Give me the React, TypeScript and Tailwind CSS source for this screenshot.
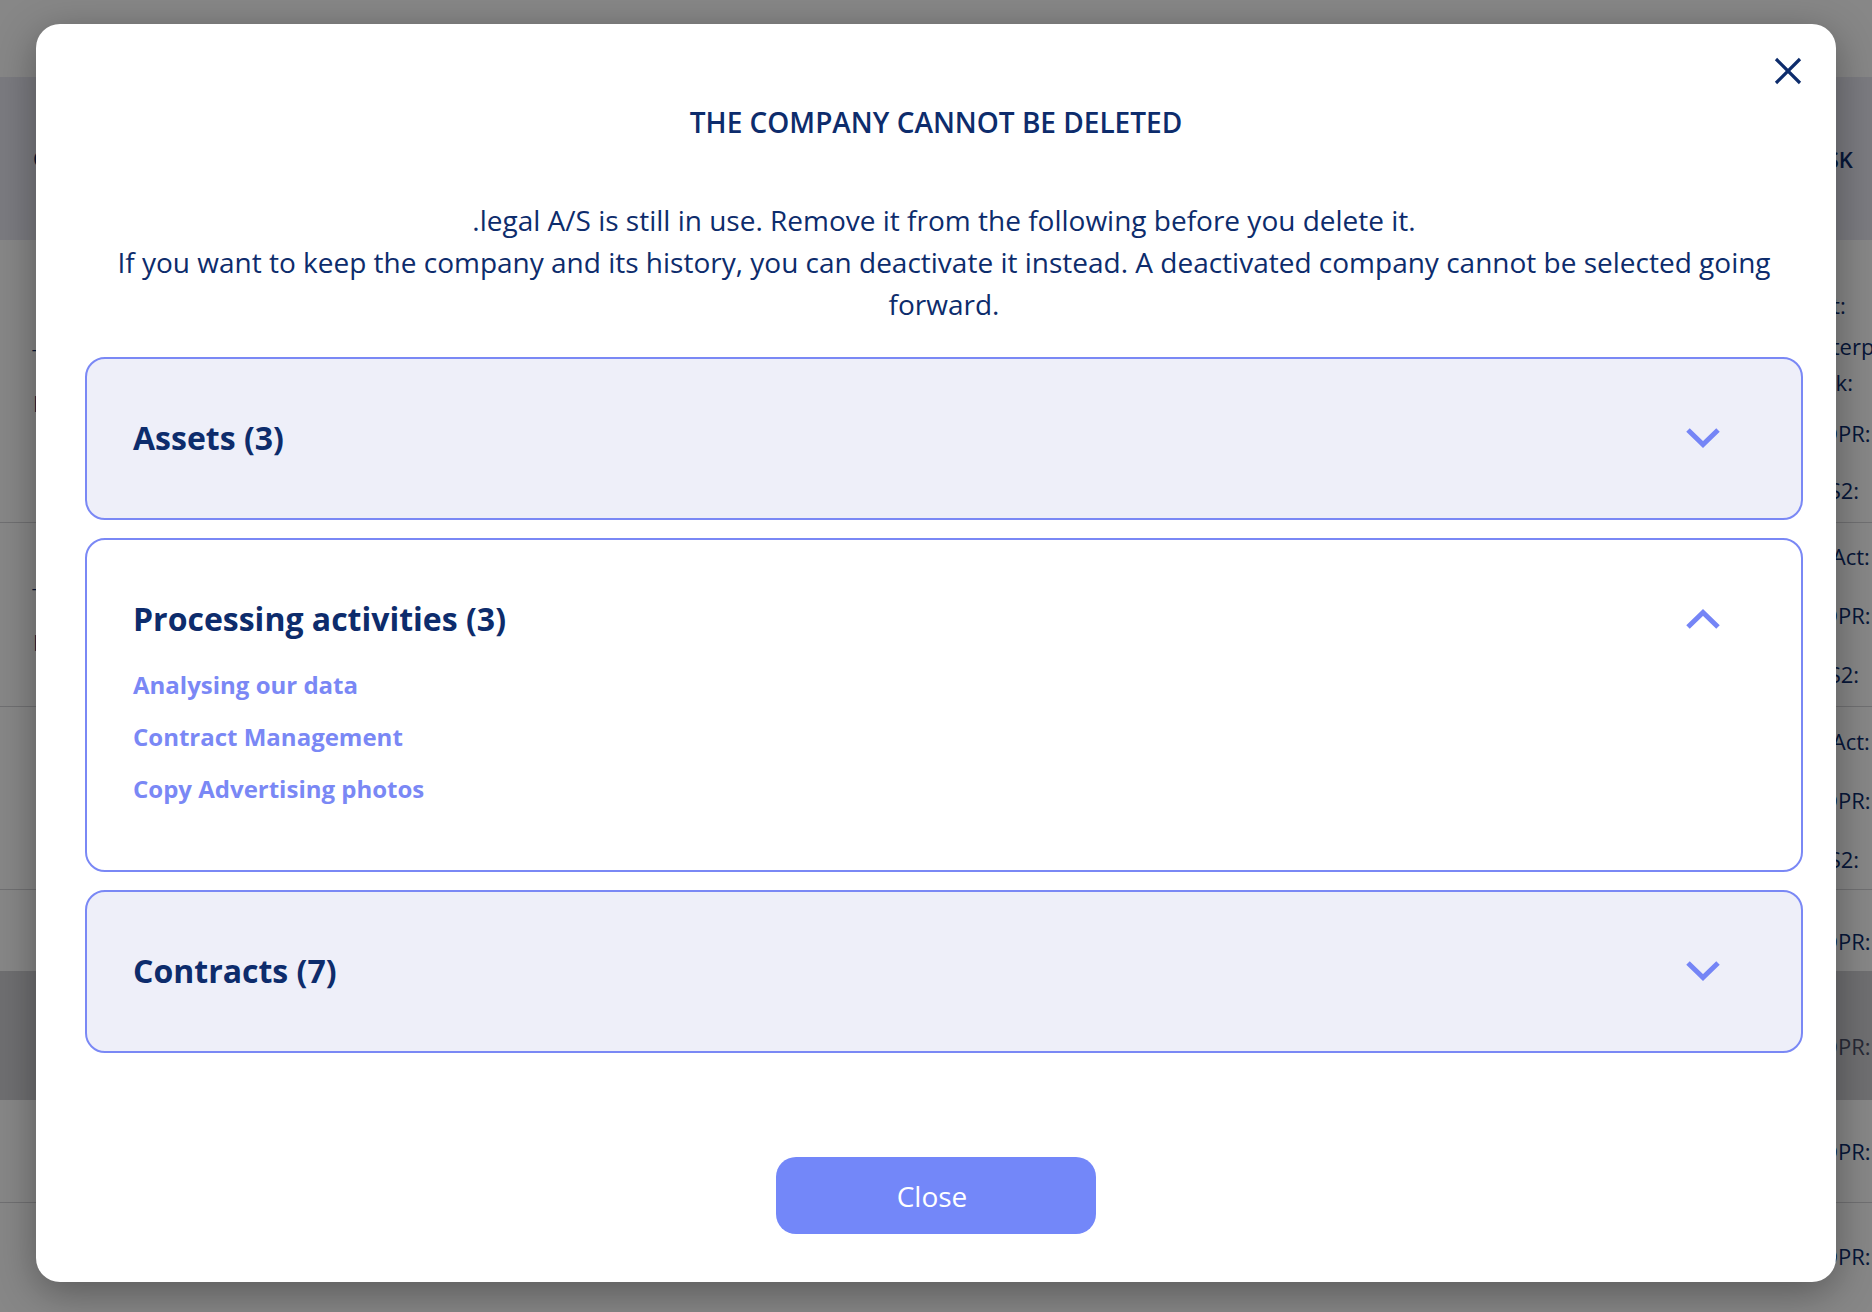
import { useState } from 'react';

const NAVY = 'text-[#0d2c6c]';

interface Section {
  id: string;
  title: string;
  count: number;
  items: string[];
}

const SECTIONS: Section[] = [
  { id: 'assets', title: 'Assets', count: 3, items: ['Server room', 'Office laptops', 'Customer database'] },
  {
    id: 'processing',
    title: 'Processing activities',
    count: 3,
    items: ['Analysing our data', 'Contract Management', 'Copy Advertising photos'],
  },
  { id: 'contracts', title: 'Contracts', count: 7, items: [] },
];

function Chevron({ up }: { up?: boolean }) {
  return (
    <svg width="36" height="22" viewBox="0 0 36 22" fill="none" className={up ? 'rotate-180' : ''}>
      <polyline points="3,3 18,17.5 33,3" stroke="#7585f6" strokeWidth="5" strokeLinejoin="miter" />
    </svg>
  );
}

function CloseIcon() {
  return (
    <svg width="28" height="28" viewBox="0 0 28 28" fill="none">
      <path d="M2 2 L26 26 M26 2 L2 26" stroke="#0d2c6c" strokeWidth="3.2" />
    </svg>
  );
}

function AccordionItem({ section, open, onToggle }: { section: Section; open: boolean; onToggle: () => void }) {
  return (
    <div className={`rounded-[20px] border-2 border-[#7a88f5] ${open ? 'bg-white' : 'bg-[#eeeff9]'}`}>
      <button
        onClick={onToggle}
        className={`w-full flex items-center justify-between pl-[46px] pr-[80px] pt-[60px] ${open ? 'pb-0' : 'pb-[61px]'} text-left`}
      >
        <span className={`text-[32px] leading-[38px] font-bold ${NAVY}`}>
          {section.title} ({section.count})
        </span>
        <Chevron up={open} />
      </button>
      {open && (
        <ul className="pl-[46px] pt-[21px] pb-[55px]">
          {section.items.map(item => (
            <li key={item} className="text-[24px] leading-[52px] font-bold text-[#7a88f5]">
              {item}
            </li>
          ))}
        </ul>
      )}
    </div>
  );
}

function BackgroundPage() {
  const right = 'w-[66px] text-[22px] text-[#0d2c6c] leading-none';
  return (
    <div className="flex flex-col h-[1312px] bg-white font-['Open_Sans',sans-serif]">
      <div className="h-[77px] shrink-0" />
      <div className="h-[163px] shrink-0 bg-[#e8e8f1] flex items-center justify-between">
        <span className="pl-[33px] text-[22px] font-semibold text-[#0d2c6c]">Company</span>
        <span className={`${right} font-semibold`}>RISK</span>
      </div>
      <div className="h-[283px] shrink-0 border-b border-[#d4d4d8] flex justify-between">
        <div className="pl-[33px] pt-[108px] flex flex-col gap-[22px] text-[22px] text-[#0d2c6c] leading-none">
          <span>‾</span>
          <span>Legal</span>
        </div>
        <div className={`${right} pt-[54px] flex flex-col`}>
          <span>Cat:</span>
          <span className="mt-[19px]">Enterprise</span>
          <span className="mt-[14px]">Risk:</span>
          <span className="mt-[29px]">GDPR:</span>
          <span className="mt-[35px]">NIS2:</span>
        </div>
      </div>
      <div className="h-[184px] shrink-0 border-b border-[#d4d4d8] flex justify-between">
        <div className="pl-[33px] pt-[64px] flex flex-col gap-[22px] text-[22px] text-[#0d2c6c] leading-none">
          <span>‾</span>
          <span>Legal</span>
        </div>
        <div className={`${right} pt-[22px] flex flex-col gap-[37px]`}>
          <span>AI Act:</span>
          <span>GDPR:</span>
          <span>NIS2:</span>
        </div>
      </div>
      <div className="h-[183px] shrink-0 border-b border-[#d4d4d8] flex justify-end">
        <div className={`${right} pt-[23px] flex flex-col gap-[37px]`}>
          <span>AI Act:</span>
          <span>GDPR:</span>
          <span>NIS2:</span>
        </div>
      </div>
      <div className="h-[81px] shrink-0 flex justify-end">
        <div className={`${right} pt-[40px]`}>GDPR:</div>
      </div>
      <div className="h-[129px] shrink-0 bg-[#d2d2d6] flex justify-end">
        <div className={`${right} pt-[64px] text-[#4a4f66]`}>GDPR:</div>
      </div>
      <div className="h-[103px] shrink-0 border-b border-[#d4d4d8] flex justify-end">
        <div className={`${right} pt-[40px]`}>GDPR:</div>
      </div>
      <div className="flex-1 flex justify-end">
        <div className={`${right} pt-[42px]`}>GDPR:</div>
      </div>
    </div>
  );
}

export default function App() {
  const [open, setOpen] = useState<string | null>('processing');

  return (
    <div className="relative w-full h-[1312px] overflow-hidden font-['Open_Sans',sans-serif]">
      <BackgroundPage />
      <div className="absolute inset-0 bg-black/47" />
      <div className="absolute inset-0 flex justify-center pt-[24px]">
        <div className="relative w-[1800px] h-[1258px] rounded-[24px] bg-white shadow-[0_10px_40px_rgba(0,0,0,0.35)] flex flex-col">
          <button className="absolute top-[33px] right-[34px]" aria-label="Close">
            <CloseIcon />
          </button>

          <h2 className={`pt-[84px] text-center text-[28px] leading-[28px] font-semibold ${NAVY}`}>
            THE COMPANY CANNOT BE DELETED
          </h2>

          <div className="pl-[49px] pr-[33px] flex flex-col">
            <p className={`mt-[63px] text-center text-[28px] leading-[42px] ${NAVY}`}>
              .legal A/S is still in use. Remove it from the following before you delete it.
              <br />
              If you want to keep the company and its history, you can deactivate it instead. A deactivated company
              cannot be selected going forward.
            </p>

            <div className="mt-[32px] flex flex-col gap-[18px]">
              {SECTIONS.map(s => (
                <AccordionItem
                  key={s.id}
                  section={s}
                  open={open === s.id}
                  onToggle={() => setOpen(o => (o === s.id ? null : s.id))}
                />
              ))}
            </div>
          </div>

          <div className="mt-auto pb-[48px] flex justify-center">
            <button className="w-[320px] h-[77px] pr-[8px] rounded-[20px] bg-[#7387f9] text-white text-[28px]">
              Close
            </button>
          </div>
        </div>
      </div>
    </div>
  );
}
